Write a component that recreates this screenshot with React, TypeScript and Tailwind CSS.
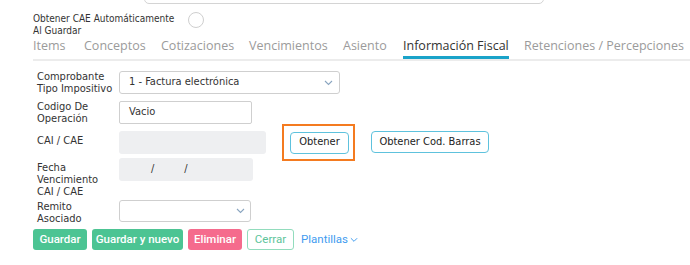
import React from 'react'

const Chevron = ({ className }: { className?: string }) => (
  <svg className={className} width="9" height="6" viewBox="0 0 9 6" fill="none">
    <path d="M1 1l3.5 3.5L8 1" stroke="currentColor" strokeWidth="1.1" />
  </svg>
)

const tabs = [
  { label: 'Items', w: 'w-[51px]' },
  { label: 'Conceptos', w: 'w-[77px]' },
  { label: 'Cotizaciones', w: 'w-[88px]' },
  { label: 'Vencimientos', w: 'w-[94px]' },
  { label: 'Asiento', w: 'w-[60px]' },
  { label: 'Información Fiscal', w: 'w-[121px]', active: true },
  { label: 'Retenciones / Percepciones', w: 'w-[170px]' },
]

const font = "font-['DejaVu_Sans_Condensed','DejaVu_Sans',sans-serif]"
const labelCls = `w-[82px] shrink-0 whitespace-nowrap text-[11px] leading-[12px] text-[#333] ${font}`
const fieldText = `whitespace-nowrap text-[11px] text-[#333] ${font}`

const App = () => {
  return (
    <div className="w-[690px] h-[265px] bg-white overflow-hidden relative">
      {/* input cut at the top */}
      <div className="ml-[144px] w-[400px] h-[30px] -mt-[26px] border border-[#d4d4d4] rounded-[5px]" />

      <div className="flex items-start pl-[33px] mt-[9px]">
        <div className={`text-[10px] leading-[11.5px] text-[#333] whitespace-nowrap w-[155px] shrink-0 ${font}`}>
          Obtener CAE Automáticamente
          <br />
          Al Guardar
        </div>
        <div className="w-[16px] h-[16px] rounded-full border border-[#cfcfcf] mt-[-1px]" />
      </div>

      {/* tabs */}
      <div className="ml-[33px] mt-[1px] flex border-b-[2px] border-[#ececec] font-['Open_Sans',sans-serif] text-[12.5px] leading-[18px] whitespace-nowrap">
        {tabs.map((t) => (
          <div key={t.label} className={`${t.w} shrink-0`}>
            <span
              className={
                t.active
                  ? 'inline-block text-[#333] pb-[1px] border-b-[3px] border-[#1aa3c9] -mb-[2px]'
                  : 'inline-block text-[#9b9b9b] pb-[4px]'
              }
            >
              {t.label}
            </span>
          </div>
        ))}
      </div>

      <div className="pl-[37px]">
        {/* Comprobante */}
        <div className="flex items-center mt-[10px] h-[23px]">
          <div className={labelCls}>
            Comprobante
            <br />
            Tipo Impositivo
          </div>
          <div className={`w-[221px] h-[23px] border border-[#cfcfcf] rounded-[3px] flex items-center justify-between pl-[9px] pr-[6px] ${fieldText}`}>
            <span>1 - Factura electrónica</span>
            <Chevron className="text-[#8aa5c0]" />
          </div>
        </div>

        {/* Codigo */}
        <div className="flex items-center mt-[7px] h-[23px]">
          <div className={labelCls}>
            Codigo De
            <br />
            Operación
          </div>
          <div className={`w-[133px] h-[23px] border border-[#cfcfcf] rounded-[2px] flex items-center pl-[9px] ${fieldText}`}>
            Vacio
          </div>
        </div>

        {/* CAI / CAE */}
        <div className="flex items-start mt-[7px] h-[23px]">
          <div className={`${labelCls} pt-[4px]`}>CAI / CAE</div>
          <div className="w-[147px] h-[23px] bg-[#eeeff1] rounded-[3px]" />
          <div className="ml-[16px] -mt-[7px] w-[73px] h-[37px] border-[2px] border-[#f47b20] flex items-center pl-[6px]">
            <button className={`w-[59px] h-[22px] border border-[#5ec2dd] rounded-[4px] bg-white text-[11px] text-[#222] ${font}`}>
              Obtener
            </button>
          </div>
          <button className={`ml-[16px] w-[118px] h-[22px] border border-[#5ec2dd] rounded-[4px] bg-white text-[11px] text-[#222] whitespace-nowrap ${font}`}>
            Obtener Cod. Barras
          </button>
        </div>

        {/* Fecha */}
        <div className="flex items-start mt-[4px] h-[38px]">
          <div className={`${labelCls} pt-[4px]`}>
            Fecha
            <br />
            Vencimiento
            <br />
            CAI / CAE
          </div>
          <div className={`w-[134px] h-[23px] bg-[#eeeff1] rounded-[3px] flex items-center ${fieldText}`}>
            <span className="ml-[32px]">/</span>
            <span className="ml-[30px]">/</span>
          </div>
        </div>

        {/* Remito */}
        <div className="flex items-center mt-[5px] h-[23px]">
          <div className={labelCls}>
            Remito
            <br />
            Asociado
          </div>
          <div className="w-[132px] h-[22px] border border-[#cfcfcf] rounded-[3px] flex items-center justify-end pr-[5px] -mt-[3px]">
            <Chevron className="text-[#8aa5c0]" />
          </div>
        </div>
      </div>

      {/* actions */}
      <div className="flex items-center gap-[5px] pl-[33px] mt-[5px] font-['Roboto',sans-serif] text-[11.5px] whitespace-nowrap">
        <button className="w-[54px] h-[21px] rounded-[3px] bg-[#4cc493] text-white font-medium">Guardar</button>
        <button className="w-[91px] h-[21px] rounded-[3px] bg-[#4cc493] text-white font-medium">Guardar y nuevo</button>
        <button className="w-[54px] h-[21px] rounded-[3px] bg-[#f56b8d] text-white font-medium">Eliminar</button>
        <button className="w-[47px] h-[21px] rounded-[3px] border border-[#92dcbd] bg-white text-[#5cc49a]">Cerrar</button>
        <span className="ml-[2px] flex items-center gap-[2px] text-[#3f9cf0]">
          Plantillas
          <Chevron className="text-[#3f9cf0] w-[8px]" />
        </span>
      </div>
    </div>
  )
}

export default App
